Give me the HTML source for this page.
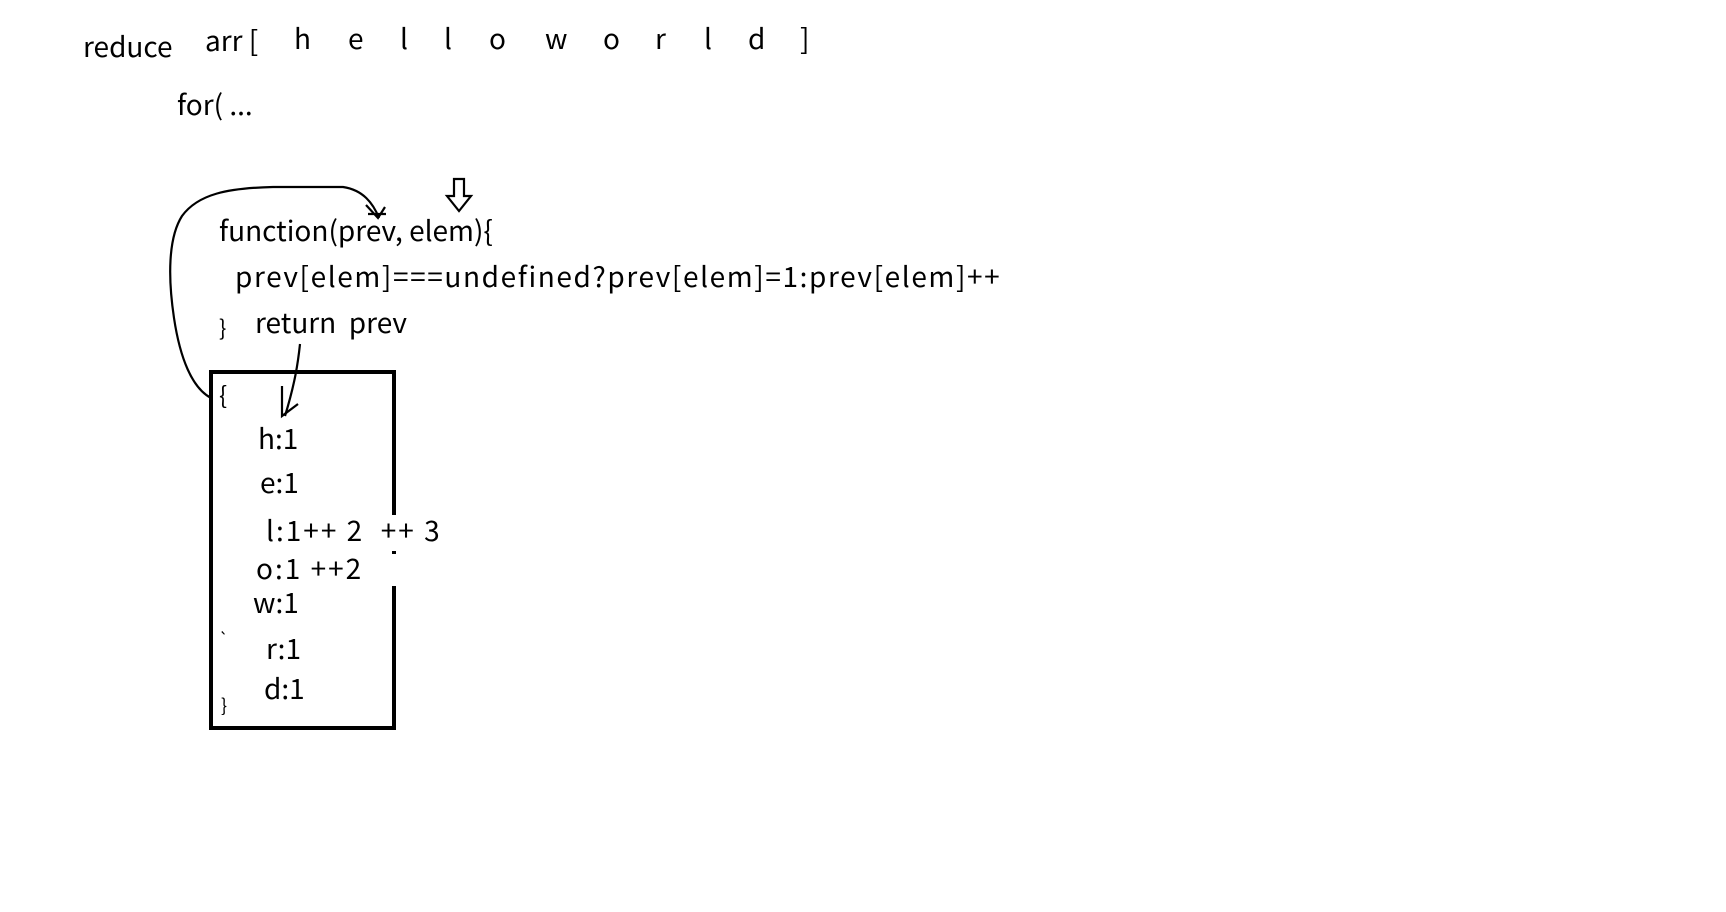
<!DOCTYPE html>
<html><head><meta charset="utf-8"><style>
body{margin:0;width:1726px;height:912px;background:#fff;position:relative;overflow:hidden;font-family:"Noto Sans CJK SC","Liberation Sans",sans-serif;color:#000;font-size:28px}
.t{position:absolute;white-space:pre;line-height:1}
</style></head><body>
<div class="t" style="left:83px;top:32px">reduce</div>
<div class="t" style="left:205px;top:26px">arr [</div>
<div class="t" style="left:294px;top:24px">h</div>
<div class="t" style="left:348px;top:24px">e</div>
<div class="t" style="left:400px;top:24px">l</div>
<div class="t" style="left:444px;top:24px">l</div>
<div class="t" style="left:489px;top:24px">o</div>
<div class="t" style="left:545px;top:24px">w</div>
<div class="t" style="left:603px;top:24px">o</div>
<div class="t" style="left:655px;top:24px">r</div>
<div class="t" style="left:704px;top:24px">l</div>
<div class="t" style="left:748px;top:24px">d</div>
<div class="t" style="left:800px;top:24px">]</div>
<div class="t" style="left:177px;top:90px">for( ...</div>
<div class="t" style="left:219px;top:216px">function(prev, elem){</div>
<div class="t" style="left:235px;top:262px;letter-spacing:1.6px">prev[elem]===undefined?prev[elem]=1:prev[elem]++</div>
<div class="t" style="left:219px;top:316px;font-size:22px">}</div>
<div class="t" style="left:255px;top:308px">return  prev</div>
<div style="position:absolute;left:209px;top:370px;width:179px;height:352px;border:4px solid #000"></div>
<div style="position:absolute;left:386px;top:515px;width:12px;height:36px;background:#fff"></div>
<div style="position:absolute;left:386px;top:554px;width:12px;height:32px;background:#fff"></div>
<div class="t" style="left:219px;top:382px;font-size:24px">{</div>
<div class="t" style="left:258px;top:424px">h:1</div>
<div class="t" style="left:260px;top:468px">e:1</div>
<div class="t" style="left:266px;top:516px;letter-spacing:2px">l:1++ 2  ++ 3</div>
<div class="t" style="left:256px;top:554px;letter-spacing:2px">o:1 ++2</div>
<div class="t" style="left:253px;top:588px">w:1</div>
<div class="t" style="left:266px;top:634px">r:1</div>
<div class="t" style="left:264px;top:674px">d:1</div>
<div class="t" style="left:219px;top:630px;font-size:16px">`</div>
<div class="t" style="left:221px;top:696px;font-size:18px">}</div>
<svg style="position:absolute;left:0;top:0" width="1726" height="912">
<g fill="none" stroke="#000" stroke-width="2.2">
<path d="M211 398 C192 388 180 358 174 318 C168 278 168 238 182 216 C198 194 228 188 273 187 L343 187 C363 190 373 203 379 218"/>
<path d="M366 205 L378 218 L385 207 M368 214 L386 214"/>
<path d="M300 344 C298 363 295 383 285 416"/>
<path d="M282 386 L282 416 L298 404"/>
<path d="M454 179 L464 179 L464 196 L471 196 L459 211 L447 196 L454 196 Z"/>
</g>
</svg>
</body></html>
